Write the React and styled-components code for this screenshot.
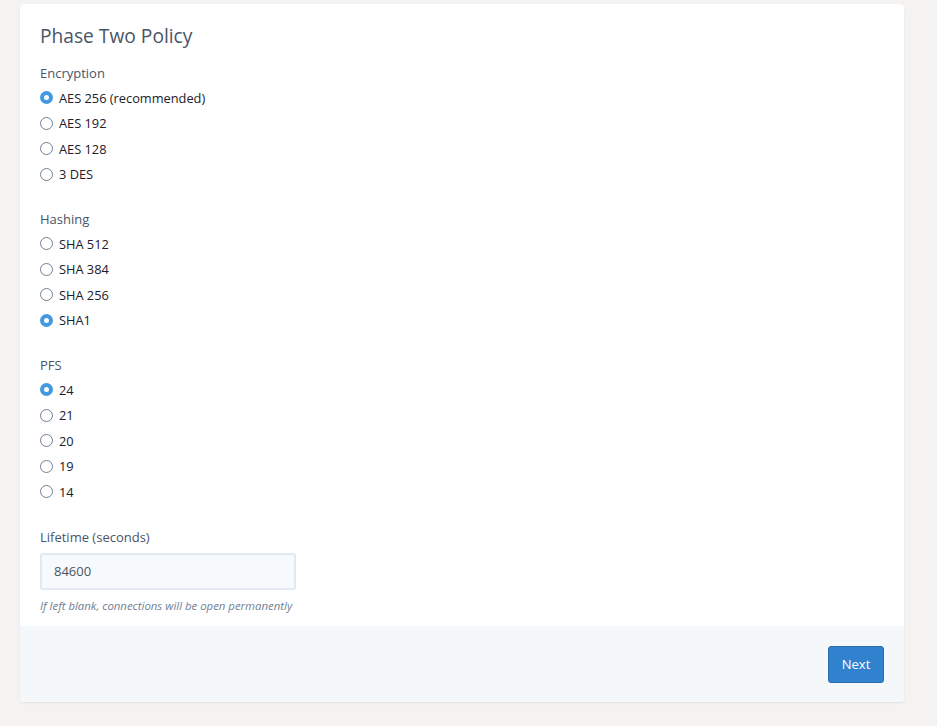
import React, { useState } from 'react';
import styled, { createGlobalStyle } from 'styled-components';

const GlobalStyle = createGlobalStyle`
  html, body {
    margin: 0;
    padding: 0;
    background: #f4f3f1;
    font-family: "Open Sans", "Noto Sans", sans-serif;
  }
`;

const Card = styled.div`
  margin: 4px 33px 24px 20px;
  background: #ffffff;
  border-radius: 4px;
  box-shadow: 0 1px 2px rgba(0, 0, 0, 0.08);
  overflow: hidden;
`;

const Body = styled.div`
  padding: 20px 20px 12px;
`;

const Title = styled.h2`
  margin: 0 0 15px;
  font-size: 19.2px;
  line-height: 24px;
  font-weight: 400;
  color: #4a5568;
`;

const Group = styled.div`
  margin-bottom: 22px;
`;

const GroupLabel = styled.div`
  font-size: 13px;
  line-height: 20px;
  color: #4a5568;
  margin-bottom: 2px;
`;

const Option = styled.label`
  display: flex;
  align-items: center;
  height: 25.5px;
  font-size: 12.8px;
  color: #1a202c;
  cursor: pointer;
`;

const Dot = styled.span`
  width: 13px;
  height: 13px;
  box-sizing: border-box;
  border-radius: 50%;
  margin-right: 6px;
  flex-shrink: 0;
  border: ${({ checked }) => (checked ? '4px solid #4299e1' : '1px solid #718096')};
  background: #ffffff;
`;

const Input = styled.input`
  display: block;
  box-sizing: border-box;
  width: 256px;
  height: 37px;
  margin-top: 6px;
  padding: 0 12px;
  border: 2px solid #e2e8f0;
  border-radius: 3px;
  background: #f7fafc;
  font-family: inherit;
  font-size: 13px;
  color: #4a5568;
  outline: none;
`;

const Help = styled.div`
  margin-top: 8px;
  font-size: 11.4px;
  line-height: 16px;
  font-style: italic;
  color: #718096;
`;

const Footer = styled.div`
  display: flex;
  justify-content: flex-end;
  padding: 20px 20px 19px;
  background: #f5f8fb;
`;

const Button = styled.button`
  width: 56px;
  height: 37px;
  border: 1px solid #2b6cb0;
  border-radius: 3px;
  background: #3182ce;
  color: #ffffff;
  font-family: inherit;
  font-size: 13px;
  cursor: pointer;
`;

const groups = [
  { name: 'Encryption', options: ['AES 256 (recommended)', 'AES 192', 'AES 128', '3 DES'], initial: 0 },
  { name: 'Hashing', options: ['SHA 512', 'SHA 384', 'SHA 256', 'SHA1'], initial: 3 },
  { name: 'PFS', options: ['24', '21', '20', '19', '14'], initial: 0 },
];

const RadioGroup = ({ name, options, initial }) => {
  const [value, setValue] = useState(initial);
  return (
    <Group>
      <GroupLabel>{name}</GroupLabel>
      {options.map((opt, i) => (
        <Option key={opt} onClick={() => setValue(i)}>
          <Dot checked={value === i} />
          {opt}
        </Option>
      ))}
    </Group>
  );
};

export default function App() {
  const [lifetime, setLifetime] = useState('84600');
  return (
    <>
      <GlobalStyle />
      <Card>
        <Body>
          <Title>Phase Two Policy</Title>
          {groups.map((g) => (
            <RadioGroup key={g.name} {...g} />
          ))}
          <GroupLabel>Lifetime (seconds)</GroupLabel>
          <Input value={lifetime} onChange={(e) => setLifetime(e.target.value)} />
          <Help>If left blank, connections will be open permanently</Help>
        </Body>
        <Footer>
          <Button>Next</Button>
        </Footer>
      </Card>
    </>
  );
}
